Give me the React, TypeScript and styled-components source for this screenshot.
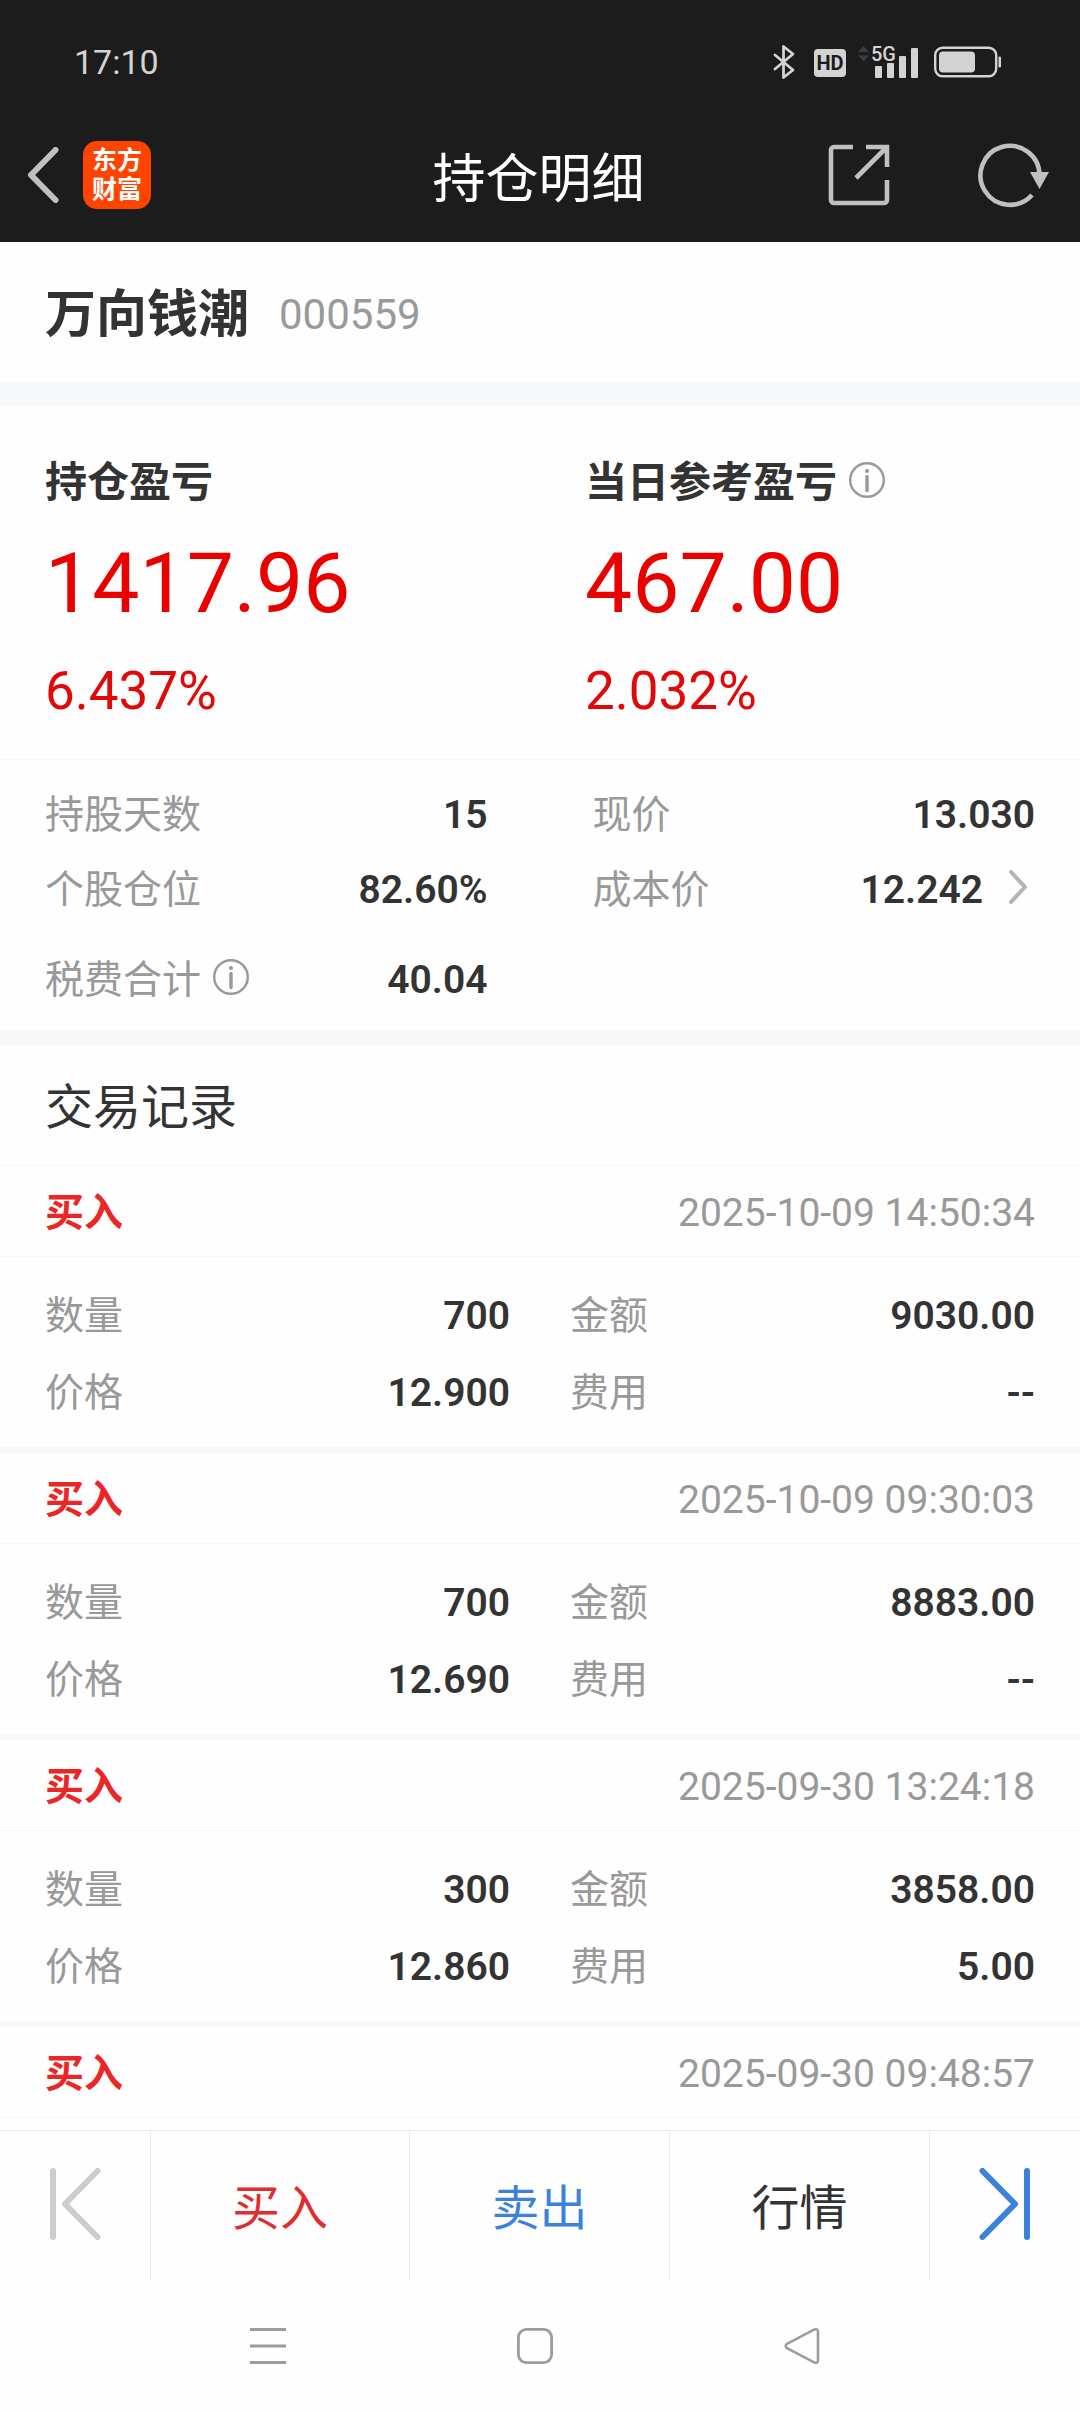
import React from 'react';
import styled, { createGlobalStyle } from 'styled-components';

const GlobalStyle = createGlobalStyle`
  * { box-sizing: border-box; }
  body {
    margin: 0;
    background: #fefefe;
    color: #333333;
    font-family: Roboto, "Noto Sans CJK SC", sans-serif;
  }
  h1, h2, h3, p, dl, dt, dd, ul { margin: 0; padding: 0; font-weight: 400; }
  ul { list-style: none; }
  button { margin: 0; padding: 0; border: 0; background: none; color: inherit; font: inherit; cursor: pointer; }
  svg { display: block; flex: none; }
`;

const Page = styled.div`
  display: flex;
  flex-direction: column;
  min-height: 100vh;
`;

const Header = styled.header`
  background: #1c1c1c;
`;

const StatusBar = styled.div`
  display: flex;
  align-items: center;
  justify-content: space-between;
  height: 108px;
  padding: 16px 78px 0 74px;
  color: #d3d3d3;
`;

const Clock = styled.time`
  font-size: 34px;
  line-height: 40px;
`;

const StatusIcons = styled.div`
  display: flex;
  align-items: center;
`;

const HdBadge = styled.span`
  width: 32px;
  height: 28px;
  margin: 2px 12px 0 19px;
  border-radius: 4px;
  background: #d3d3d3;
  color: #1c1c1c;
  font-size: 20px;
  font-weight: 700;
  line-height: 28px;
  text-align: center;
`;

const Signal = styled.div`
  margin-right: 14px;
`;

const TitleBar = styled.div`
  display: grid;
  grid-template-columns: 1fr auto 1fr;
  align-items: center;
  height: 134px;
  padding: 0 30px 0 27px;
`;

const BackGroup = styled.div`
  display: flex;
  align-items: center;
  gap: 24px;
`;

const Logo = styled.div`
  display: grid;
  place-content: center;
  width: 68px;
  height: 68px;
  border-radius: 14px;
  background: #ff4400;
  color: #ffffff;
  font-size: 25px;
  font-weight: 700;
  line-height: 29px;
`;

const Title = styled.h1`
  padding-top: 10px;
  color: #ffffff;
  font-size: 53px;
  line-height: 64px;
`;

const HeaderActions = styled.div`
  display: flex;
  align-items: center;
  justify-content: flex-end;
  gap: 88px;
`;

const Content = styled.main`
  flex: 1;
`;

const StockRow = styled.section`
  display: flex;
  align-items: center;
  gap: 30px;
  height: 140px;
  padding: 6px 45px 0;
`;

const StockName = styled.h2`
  font-size: 51px;
  font-weight: 700;
  line-height: 60px;
`;

const StockCode = styled.span`
  color: #999999;
  font-size: 42px;
  line-height: 60px;
`;

const Band = styled.div<{ $size: number }>`
  height: ${(p) => p.$size}px;
  background: #f6f8fa;
`;

const ProfitGrid = styled.section`
  display: grid;
  grid-template-columns: 1fr 1fr;
  border-bottom: 1px solid #f5f6f7;
`;

const ProfitCell = styled.div`
  display: flex;
  flex-direction: column;
  gap: 25px;
  padding: 51px 45px 36px;
`;

const ProfitLabel = styled.h3`
  display: flex;
  align-items: center;
  gap: 12px;
  font-size: 42px;
  font-weight: 700;
  line-height: 52px;
`;

const ProfitValue = styled.p`
  color: #eb0000;
  font-size: 84px;
  line-height: 100px;
`;

const ProfitRate = styled.p`
  color: #e00808;
  font-size: 53px;
  line-height: 64px;
`;

const StatGrid = styled.dl`
  display: grid;
  grid-template-columns: 1fr 1fr;
  grid-template-rows: 60px 60px 90px;
  gap: 15px 105px;
  padding: 25px 45px 5px;
`;

const Pair = styled.div`
  display: flex;
  align-items: center;
  justify-content: space-between;
  font-size: 39px;
  line-height: 60px;
`;

const PairLabel = styled.dt`
  display: flex;
  align-items: center;
  gap: 12px;
  color: #999999;
`;

const PairValue = styled.dd`
  display: flex;
  align-items: center;
  gap: 26px;
  font-weight: 600;
`;

const InfoControl = styled.button`
  padding-bottom: 6px;
`;

const MoreButton = styled.button`
  padding: 0 8px 6px 0;
`;

const SectionTitle = styled.h2`
  padding: 33px 45px 27px;
  border-bottom: 1px solid #f5f6f7;
  font-size: 48px;
  line-height: 60px;
`;

const RecordHead = styled.div`
  display: flex;
  align-items: center;
  justify-content: space-between;
  height: 91px;
  padding: 4px 45px 0;
  border-bottom: 1px solid #f5f6f7;
  font-size: 39px;
  line-height: 60px;
`;

const Side = styled.h3`
  color: #ea2626;
  font-size: 39px;
  font-weight: 700;
`;

const RecordTime = styled.time`
  color: #999999;
`;

const RecordBody = styled.dl`
  display: grid;
  grid-template-columns: 1fr 1fr;
  gap: 17px 60px;
  padding: 29px 45px 24px;
`;

const ActionBar = styled.nav`
  display: grid;
  grid-template-columns: 150fr 259fr 260fr 260fr 151fr;
  height: 150px;
  border-top: 1px solid #e9e9e9;
`;

const Action = styled.button<{ $color?: string }>`
  display: flex;
  align-items: center;
  justify-content: center;
  color: ${(p) => p.$color || '#333333'};
  font-size: 48px;
  line-height: 60px;
  & + & { border-left: 1px solid #e9e9e9; }
  span { padding-top: 6px; }
  svg { margin-bottom: 4px; }
`;

const SystemNav = styled.nav`
  display: flex;
  justify-content: space-between;
  align-items: center;
  height: 132px;
  padding: 0 260px 0 250px;
`;

const InfoButton = ({ label }: { label: string }) => (
  <InfoControl type="button" aria-label={label}>
    <svg width="36" height="36" viewBox="0 0 36 36" fill="none" stroke="#999999">
      <circle cx="18" cy="18" r="16.8" strokeWidth="2.4" />
      <path d="M18 14.5v14" strokeWidth="3.4" strokeLinecap="round" />
      <circle cx="18" cy="9" r="2" fill="#999999" stroke="none" />
    </svg>
  </InfoControl>
);

type PairData = { label: string; value: string; info?: boolean; more?: boolean };

const PairItem = ({ label, value, info, more }: PairData) => (
  <Pair>
    <PairLabel>
      {label}
      {info && <InfoButton label={label + '说明'} />}
    </PairLabel>
    <PairValue>
      {value}
      {more && (
        <MoreButton type="button" aria-label="成本价详情">
          <svg width="18" height="34" viewBox="0 0 18 34" fill="none" stroke="#b4b4b4" strokeWidth="4" strokeLinecap="round" strokeLinejoin="round">
            <path d="M2 2l14 15L2 32" />
          </svg>
        </MoreButton>
      )}
    </PairValue>
  </Pair>
);

const stats: PairData[] = [
  { label: '持股天数', value: '15' },
  { label: '现价', value: '13.030' },
  { label: '个股仓位', value: '82.60%' },
  { label: '成本价', value: '12.242', more: true },
  { label: '税费合计', value: '40.04', info: true },
];

const records: { time: string; pairs?: PairData[] }[] = [
  {
    time: '2025-10-09 14:50:34',
    pairs: [
      { label: '数量', value: '700' },
      { label: '金额', value: '9030.00' },
      { label: '价格', value: '12.900' },
      { label: '费用', value: '--' },
    ],
  },
  {
    time: '2025-10-09 09:30:03',
    pairs: [
      { label: '数量', value: '700' },
      { label: '金额', value: '8883.00' },
      { label: '价格', value: '12.690' },
      { label: '费用', value: '--' },
    ],
  },
  {
    time: '2025-09-30 13:24:18',
    pairs: [
      { label: '数量', value: '300' },
      { label: '金额', value: '3858.00' },
      { label: '价格', value: '12.860' },
      { label: '费用', value: '5.00' },
    ],
  },
  { time: '2025-09-30 09:48:57' },
];

const BluetoothIcon = () => (
  <svg width="22" height="36" viewBox="0 0 22 36" fill="none" stroke="#d3d3d3" strokeWidth="2.8" strokeLinecap="round" strokeLinejoin="round">
    <path d="M2 11l18 15-9.5 7.500V2.500L20 10 2 25" />
  </svg>
);

const SignalIcon = () => (
  <svg width="62" height="48" viewBox="0 -6 62 48" fill="#d3d3d3">
    <path d="M0 8l5.500-6L11 8zM0 11.500h11l-5.500 6z" fill="#3c3c3c" />
    <text x="13" y="17" fontSize="20" fontWeight="500" fontFamily="Roboto, sans-serif">5G</text>
    <rect x="17" y="22" width="7" height="12" rx="1" />
    <rect x="29" y="19" width="7" height="15" rx="1" />
    <rect x="41" y="12" width="7" height="22" rx="1" />
    <rect x="53" y="4" width="7" height="30" rx="1" />
  </svg>
);

const BatteryIcon = () => (
  <svg width="68" height="32" viewBox="0 0 68 32" fill="none">
    <rect x="1.2" y="1.700" width="61" height="28.600" rx="7.500" stroke="#d3d3d3" strokeWidth="2.400" />
    <rect x="5" y="5.500" width="36" height="21" rx="4" fill="#d3d3d3" />
    <rect x="64.500" y="10.500" width="2.500" height="11" rx="1.200" fill="#d3d3d3" />
  </svg>
);

export default function App() {
  return (
    <Page>
      <GlobalStyle />
      <Header>
        <StatusBar>
          <Clock>17:10</Clock>
          <StatusIcons>
            <BluetoothIcon />
            <HdBadge>HD</HdBadge>
            <Signal><SignalIcon /></Signal>
            <BatteryIcon />
          </StatusIcons>
        </StatusBar>
        <TitleBar>
          <BackGroup>
            <button type="button" aria-label="返回">
              <svg width="32" height="56" viewBox="0 0 32 56" fill="none" stroke="#c0c0c0" strokeWidth="6" strokeLinecap="round" strokeLinejoin="round">
                <path d="M28.500 3L4 28l24.500 25" />
              </svg>
            </button>
            <Logo>
              <span>东方</span>
              <span>财富</span>
            </Logo>
          </BackGroup>
          <Title>持仓明细</Title>
          <HeaderActions>
            <button type="button" aria-label="分享">
              <svg width="62" height="62" viewBox="0 0 62 62" fill="none" stroke="#c0c0c0" strokeWidth="4.600">
                <path d="M25 3H6a3 3 0 0 0-3 3v50a3 3 0 0 0 3 3h50a3 3 0 0 0 3-3V36" />
                <path d="M38 3h21v20M58 4L28 34" />
              </svg>
            </button>
            <button type="button" aria-label="刷新">
              <svg width="72" height="66" viewBox="0 0 72 66" fill="none" stroke="#c0c0c0" strokeWidth="4.600">
                <path d="M54 53A29.500 29.500 0 1 1 61.500 33" />
                <path d="M52 30h19L61.500 47z" fill="#c0c0c0" stroke="none" />
              </svg>
            </button>
          </HeaderActions>
        </TitleBar>
      </Header>

      <Content>
        <StockRow>
          <StockName>万向钱潮</StockName>
          <StockCode>000559</StockCode>
        </StockRow>
        <Band $size={24} />
        <ProfitGrid>
          <ProfitCell>
            <ProfitLabel>持仓盈亏</ProfitLabel>
            <ProfitValue>1417.96</ProfitValue>
            <ProfitRate>6.437%</ProfitRate>
          </ProfitCell>
          <ProfitCell>
            <ProfitLabel>
              当日参考盈亏
              <InfoButton label="当日参考盈亏说明" />
            </ProfitLabel>
            <ProfitValue>467.00</ProfitValue>
            <ProfitRate>2.032%</ProfitRate>
          </ProfitCell>
        </ProfitGrid>
        <StatGrid>
          {stats.map((s) => <PairItem key={s.label} {...s} />)}
        </StatGrid>
        <Band $size={15} />
        <SectionTitle>交易记录</SectionTitle>
        <ul>
          {records.map((r) => (
            <li key={r.time}>
              <RecordHead>
                <Side>买入</Side>
                <RecordTime>{r.time}</RecordTime>
              </RecordHead>
              {r.pairs && (
                <>
                  <RecordBody>
                    {r.pairs.map((p) => <PairItem key={p.label} {...p} />)}
                  </RecordBody>
                  <Band $size={6} />
                </>
              )}
            </li>
          ))}
        </ul>
      </Content>

      <ActionBar>
        <Action type="button" aria-label="上一个">
          <svg width="52" height="74" viewBox="0 0 52 74" fill="none" stroke="#cdcdcd" strokeWidth="6" strokeLinecap="round" strokeLinejoin="round">
            <path d="M4 4v66M48.500 4L16 37l32.500 33" />
          </svg>
        </Action>
        <Action type="button" $color="#e12d2d"><span>买入</span></Action>
        <Action type="button" $color="#3a82dc"><span>卖出</span></Action>
        <Action type="button"><span>行情</span></Action>
        <Action type="button" aria-label="下一个">
          <svg width="52" height="74" viewBox="0 0 52 74" fill="none" stroke="#3a82dc" strokeWidth="6" strokeLinecap="round" strokeLinejoin="round">
            <path d="M48 4v66M3.500 4L36 37 3.500 70" />
          </svg>
        </Action>
      </ActionBar>
      <SystemNav>
        <button type="button" aria-label="最近任务">
          <svg width="36" height="38" viewBox="0 0 36 38" stroke="#9c9c9c" strokeWidth="3">
            <path d="M0 2.500h36M0 19h36M0 35.500h36" />
          </svg>
        </button>
        <button type="button" aria-label="主屏幕">
          <svg width="36" height="38" viewBox="0 0 36 38" fill="none" stroke="#9c9c9c" strokeWidth="2.800">
            <rect x="1.400" y="2.400" width="33.200" height="33.200" rx="8" />
          </svg>
        </button>
        <button type="button" aria-label="返回上级">
          <svg width="36" height="38" viewBox="0 0 36 38" fill="none" stroke="#9c9c9c" strokeWidth="2.600" strokeLinejoin="round">
            <path d="M30.500 2.400L3 16.800q-2.500 2 0 4.400l27.500 14.400q3.500 1 3.500-2.600V5q0-3.600-3.500-2.600z" />
          </svg>
        </button>
      </SystemNav>
    </Page>
  );
}
